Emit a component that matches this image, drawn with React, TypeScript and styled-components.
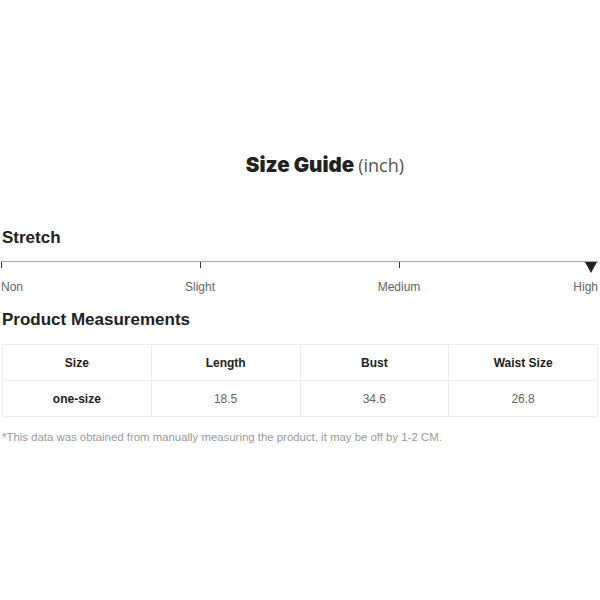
import React from "react";
import styled, { createGlobalStyle } from "styled-components";

const Global = createGlobalStyle`
  html, body { margin: 0; padding: 0; background: #fff; }
  body { font-family: "Liberation Sans", Arial, sans-serif; color: #222; }
`;

const Page = styled.div`
  width: 600px;
  box-sizing: border-box;
  padding: 153px 2px 0 2px;
`;

const Title = styled.div`
  display: grid;
  grid-template-columns: 1fr auto 1fr;
  align-items: baseline;
  column-gap: 4px;
  line-height: 24px;
`;

const TitleMain = styled.span`
  grid-column: 2;
  font-family: Inter, "Liberation Sans", sans-serif;
  font-weight: 900;
  font-size: 20.5px;
  color: #222;
`;

const TitleUnit = styled.span`
  grid-column: 3;
  font-family: "Open Sans", "Liberation Sans", sans-serif;
  font-size: 18px;
  color: #555;
`;

const Heading = styled.h2<{ $top: number }>`
  margin: ${(p) => p.$top}px 0 0 0;
  font-size: 17px;
  line-height: 20px;
  font-weight: 700;
  color: #222;
`;

const Scale = styled.div`
  margin: 13px 0 0 -1px;
  display: grid;
  grid-template-columns: 199px 199px 1fr;
  position: relative;
`;

const Segment = styled.div`
  position: relative;
  border-top: 1px solid #a8a8a8;
  padding-top: 18px;
  display: flex;
  justify-content: space-between;
  &::before {
    content: "";
    position: absolute;
    left: 0;
    top: 0;
    width: 1px;
    height: 6px;
    background: #333;
  }
`;

const Label = styled.span<{ $centered?: boolean }>`
  font-size: 12px;
  line-height: 14px;
  color: #666;
  transform: ${(p) => (p.$centered ? "translateX(-50%)" : "none")};
`;

const Marker = styled.div`
  position: absolute;
  right: 1px;
  top: 1px;
  width: 0;
  height: 0;
  border-left: 6px solid transparent;
  border-right: 6px solid transparent;
  border-top: 11px solid #222;
`;

const Table = styled.table`
  margin-top: 14px;
  width: 100%;
  border-collapse: collapse;
  table-layout: fixed;
`;

const Cell = styled.td<{ $head?: boolean }>`
  border: 1px solid #ececec;
  height: 35px;
  padding: 0;
  text-align: center;
  font-size: 12px;
  font-weight: ${(p) => (p.$head ? 700 : 400)};
  color: ${(p) => (p.$head ? "#222" : "#666")};
`;

const Note = styled.p`
  margin: 13px 0 0 0;
  font-size: 11.4px;
  line-height: 14px;
  color: #9a9a9a;
`;

export default function App() {
  return (
    <>
      <Global />
      <Page>
        <Title>
          <TitleMain>Size Guide</TitleMain>
          <TitleUnit>(inch)</TitleUnit>
        </Title>
        <Heading $top={51}>Stretch</Heading>
        <Scale>
          <Segment>
            <Label>Non</Label>
          </Segment>
          <Segment>
            <Label $centered>Slight</Label>
          </Segment>
          <Segment>
            <Label $centered>Medium</Label>
            <Label>High</Label>
          </Segment>
          <Marker />
        </Scale>
        <Heading $top={16}>Product Measurements</Heading>
        <Table>
          <tbody>
            <tr>
              <Cell $head>Size</Cell>
              <Cell $head>Length</Cell>
              <Cell $head>Bust</Cell>
              <Cell $head>Waist Size</Cell>
            </tr>
            <tr>
              <Cell $head>one-size</Cell>
              <Cell>18.5</Cell>
              <Cell>34.6</Cell>
              <Cell>26.8</Cell>
            </tr>
          </tbody>
        </Table>
        <Note>
          *This data was obtained from manually measuring the product, it may be off by 1-2 CM.
        </Note>
      </Page>
    </>
  );
}
